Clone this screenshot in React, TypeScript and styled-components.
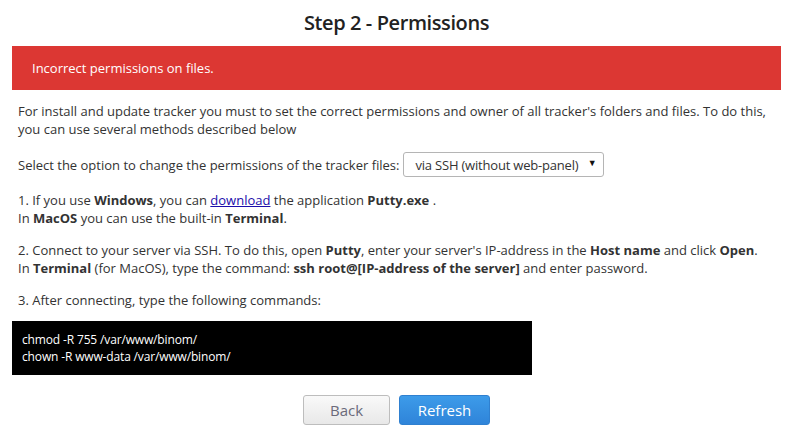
import React from 'react'
import styled, { createGlobalStyle } from 'styled-components'

const GlobalStyle = createGlobalStyle`
	html, body {
		margin: 0;
		padding: 0;
		background: #fff;
	}
	body {
		font-family: "Open Sans", "Liberation Sans", sans-serif;
		font-size: 13px;
		color: #333;
	}
`

const Page = styled.div`
	width: 769px;
	margin: 0 12px;
	padding-top: 8px;
`

const Title = styled.h1`
	margin: 0;
	font-size: 20px;
	font-weight: 600;
	text-align: center;
	color: #222;
	line-height: 30px;
	letter-spacing: -0.4px;
`

const ErrorBanner = styled.div`
	margin-top: 8px;
	height: 44px;
	display: flex;
	align-items: center;
	padding-left: 20px;
	background: #dc3733;
	color: #fff;
	font-size: 13px;
`

const Body = styled.div`
	padding: 0 6px;
`

const Para = styled.p<{ $top?: number }>`
	margin: ${(p) => p.$top ?? 14}px 0 0;
	line-height: 18px;
`

const SelectRow = styled.div`
	margin-top: 14px;
	display: flex;
	align-items: center;
	gap: 4px;
	line-height: 18px;
`

const FakeSelect = styled.div`
	box-sizing: border-box;
	height: 25px;
	width: 201px;
	border: 1px solid #b5b5b5;
	border-radius: 3px;
	display: flex;
	align-items: center;
	justify-content: space-between;
	padding: 0 7px 0 11px;
	color: #333;
	letter-spacing: -0.2px;
	span:last-child {
		font-size: 9px;
		color: #111;
		margin-top: -4px;
	}
`

const Link = styled.a`
	color: #1a0dab;
	text-decoration: underline;
`

const CodeBlock = styled.pre`
	margin: 12px 0 0;
	width: 520px;
	height: 54px;
	box-sizing: border-box;
	background: #000;
	color: #fff;
	padding: 10px 10px;
	font-family: "Open Sans", "Liberation Sans", sans-serif;
	font-size: 12px;
	line-height: 17px;
	letter-spacing: -0.15px;
`

const Buttons = styled.div`
	margin-top: 20px;
	display: flex;
	justify-content: center;
	gap: 9px;
`

const Button = styled.button<{ $primary?: boolean }>`
	box-sizing: border-box;
	height: 30px;
	width: ${(p) => (p.$primary ? 91 : 87)}px;
	border-radius: 3px;
	font-family: "Open Sans", "Liberation Sans", sans-serif;
	font-size: 15px;
	border: 1px solid ${(p) => (p.$primary ? '#2f80d0' : '#bdbdbd')};
	background: ${(p) =>
		p.$primary
			? 'linear-gradient(#3d9be9, #2f84d9)'
			: 'linear-gradient(#f9f9f9, #e8e8e8)'};
	color: ${(p) => (p.$primary ? '#fff' : '#6a6a7a')};
	cursor: pointer;
`

export default function App() {
	return (
		<>
			<GlobalStyle />
			<Page>
				<Title>Step 2 - Permissions</Title>
				<ErrorBanner>Incorrect permissions on files.</ErrorBanner>
				<Body>
					<Para $top={12}>
						For install and update tracker you must to set the correct permissions and owner of all tracker's folders and files. To do this, you can use several methods described below
					</Para>
					<SelectRow>
						<span>Select the option to change the permissions of the tracker files:</span>
						<FakeSelect>
							<span>via SSH (without web-panel)</span>
							<span>▼</span>
						</FakeSelect>
					</SelectRow>
					<Para>
						1. If you use <b>Windows</b>, you can <Link href="#">download</Link> the application <b>Putty.exe</b> .
						<br />
						In <b>MacOS</b> you can use the built-in <b>Terminal</b>.
					</Para>
					<Para>
						2. Connect to your server via SSH. To do this, open <b>Putty</b>, enter your server's IP-address in the <b>Host name</b> and click <b>Open</b>.
						<br />
						In <b>Terminal</b> (for MacOS), type the command: <b>ssh root@[IP-address of the server]</b> and enter password.
					</Para>
					<Para>3. After connecting, type the following commands:</Para>
				</Body>
				<CodeBlock>
					chmod -R 755 /var/www/binom/{'\n'}chown -R www-data /var/www/binom/
				</CodeBlock>
				<Buttons>
					<Button>Back</Button>
					<Button $primary>Refresh</Button>
				</Buttons>
			</Page>
		</>
	)
}
